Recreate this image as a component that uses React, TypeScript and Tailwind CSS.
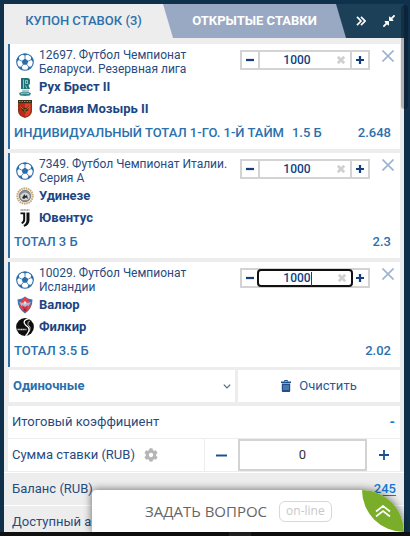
import type { ReactNode } from 'react';
import { FaCog, FaCompressAlt } from 'react-icons/fa';

type Team = { name: string; logo: ReactNode };

type Bet = {
  id: number;
  title: string;
  teams: Team[];
  market: string;
  pick: string;
  odds: string;
  active?: boolean;
};

const logoClass = 'size-[18px] shrink-0';

const RukhLogo = () => (
  <svg viewBox="0 0 18 18" className={logoClass}>
    <path d="M5 0h6.500q2.500 0 2.500 2.500v2.500q0 1.700-1.500 2.300L14 11H5z" fill="#1f7378" />
    <path d="M7.500 1.500v9M9.500 2.500h2v3h-2zM9.500 7.500l1.500 3" fill="none" stroke="#cfe3e3" strokeWidth=".7" />
    <path d="M6 11.500h7v2.500H6z" fill="#b5c8ca" />
    <path d="M3 15q6-2.500 12 0l-1 2.500q-5 .8-10 0z" fill="#35858a" />
    <path d="M5 15.500q4-1 8 0" fill="none" stroke="#d5e6e6" strokeWidth=".7" />
  </svg>
);

const SlaviaLogo = () => (
  <svg viewBox="0 0 18 18" className={logoClass}>
    <path d="M2 0h14v11q0 5-7 7-7-2-7-7z" fill="#8c3316" />
    <path d="M2 0h14v3H2z" fill="#3a3018" />
    <path d="M3 1.500h12" stroke="#a8912c" strokeWidth="1" strokeDasharray="1.500 1" />
    <path d="M3.500 3.500h11V11q0 4-5.500 5.700Q3.500 15 3.500 11z" fill="#c4251c" />
    <path d="M9 3.500h5.500V11q0 4-5.500 5.700z" fill="#e2402a" />
    <path d="M5 5.500l3 3 1-1 1 1 3-3-1 5-2 1-1 2.500-1-2.500-2-1z" fill="#3b2c10" />
    <path d="M5 6.500l2.500 3M13 6.500l-2.500 3M9 9v3.500" stroke="#c5a431" strokeWidth=".8" />
  </svg>
);

const UdineseLogo = () => (
  <svg viewBox="0 0 18 18" className={logoClass}>
    <circle cx="9" cy="9" r="7.700" fill="#f4efe4" stroke="#c5ac80" strokeWidth="2" strokeDasharray="1.600 .7" />
    <circle cx="9" cy="9" r="5.700" fill="#8f9194" stroke="#6b6e72" strokeWidth=".8" />
    <path d="M4.500 8q4.500-5 9 0v3l-2 2h-5l-2-2z" fill="#d5d7d9" />
    <path d="M6 11l2.500-4 .7 2L11 8l1 4-2-1.500L8 12z" fill="#2b2c30" />
  </svg>
);

const JuventusLogo = () => (
  <svg viewBox="0 0 18 18" className={logoClass}>
    <path d="M4.500 1h9" stroke="#555" strokeWidth="1" strokeDasharray="1.200 .4" />
    <path d="M4.500 3.500h4.700v7q0 3-3 4.500l-1-1.300q2-1.200 2-3.500V5.200H4.500z" fill="#111" />
    <path d="M10.500 3.500h3V11q0 5-5.300 6.700L7.500 16q3-1.500 3-5z" fill="#111" />
  </svg>
);

const ValurLogo = () => (
  <svg viewBox="0 0 18 18" className={logoClass}>
    <path d="M9 .5l3 2 4.500 1q0 9-7.500 14Q1.500 12.500 1.500 3.500L6 2.500z" fill="#3f74b5" />
    <path d="M9 1l3.500 3 2.500 6-3 4-3 2.500-3-2.500-3-4 2.500-6z" fill="#e6404a" />
    <path d="M3 6l4 1 2-2 2 2 4-1-2.500 4-2 .5L9 13l-1.500-2.500-2-.5z" fill="#a9bdd8" />
    <path d="M9 5l1.500 2L9 9 7.500 7z" fill="#d8dfea" />
    <path d="M6 9l3 2 3-2-1.500 4h-3z" fill="#c93440" />
    <path d="M7 13h4l-2 3z" fill="#7c3042" />
  </svg>
);

const FylkirLogo = () => (
  <svg viewBox="0 0 18 18" className={logoClass}>
    <circle cx="9" cy="9" r="8.900" fill="#0d0d0d" />
    <path d="M13 .5q-6 1.500-4.500 5Q9.500 7.500 12 9q3 3-2.500 9" fill="none" stroke="#fff" strokeWidth="1.300" />
    <path d="M14 3q-3 .5-2 3.500 3.500 2.500 1.500 7" fill="none" stroke="#ddd" strokeWidth=".8" />
    <path d="M1.500 11.500h9" stroke="#d8d8d8" strokeWidth="1.300" strokeDasharray="1.300 .4" />
  </svg>
);

const FootballIcon = ({ className }: { className: string }) => (
  <svg viewBox="0 0 18 18" className={className}>
    <circle cx="9" cy="9" r="8.300" fill="#fff" stroke="currentColor" strokeWidth="1.100" />
    <g fill="currentColor">
      <path d="M9 5.600l3.300 2.400-1.200 3.800H6.900L5.700 8z" />
      <path d="M5.800 1.200L9 2.700l3.200-1.500Q9 .1 5.800 1.200z" />
      <path d="M15.100 3.500l-.3 3.300 2.500 2.300q.2-3.400-2.200-5.600z" />
      <path d="M2.900 3.500l.3 3.300L.7 9.100Q.5 5.700 2.900 3.500z" />
      <path d="M15.700 13.500l-3.200.3-1.300 3q3-.7 4.500-3.300z" />
      <path d="M2.300 13.500l3.200.3 1.300 3q-3-.7-4.500-3.300z" />
    </g>
    <path
      d="M9 5.600V2.500M12.300 8l2.600-1.200M11.100 11.800l1.500 2.100M6.900 11.800l-1.500 2.100M5.700 8L3.100 6.800"
      stroke="currentColor"
      strokeWidth=".8"
    />
  </svg>
);

const bets: Bet[] = [
  {
    id: 12697,
    title: 'Футбол Чемпионат Беларуси. Резервная лига',
    teams: [
      { name: 'Рух Брест II', logo: <RukhLogo /> },
      { name: 'Славия Мозырь II', logo: <SlaviaLogo /> },
    ],
    market: 'ИНДИВИДУАЛЬНЫЙ ТОТАЛ 1-ГО. 1-Й ТАЙМ',
    pick: '1.5 Б',
    odds: '2.648',
  },
  {
    id: 7349,
    title: 'Футбол Чемпионат Италии. Серия А',
    teams: [
      { name: 'Удинезе', logo: <UdineseLogo /> },
      { name: 'Ювентус', logo: <JuventusLogo /> },
    ],
    market: 'ТОТАЛ 3 Б',
    pick: '',
    odds: '2.3',
  },
  {
    id: 10029,
    title: 'Футбол Чемпионат Исландии',
    teams: [
      { name: 'Валюр', logo: <ValurLogo /> },
      { name: 'Филкир', logo: <FylkirLogo /> },
    ],
    market: 'ТОТАЛ 3.5 Б',
    pick: '',
    odds: '2.02',
    active: true,
  },
];

function Sign({ plus = false, className }: { plus?: boolean; className: string }) {
  return (
    <svg viewBox="0 0 10 10" className={className} stroke="currentColor">
      <path d={plus ? 'M0 5h10M5 0v10' : 'M0 5h10'} />
    </svg>
  );
}

function StakeInput({ id, active }: { id: number; active?: boolean }) {
  return (
    <div className="relative flex h-5 w-[130px] shrink-0 border-2 border-[#d3d3d3] text-[#123f80]">
      <button type="button" aria-label="Уменьшить" className="flex w-4 items-center justify-center pb-px">
        <Sign className="size-2 stroke-[2.8]" />
      </button>
      <div
        className={
          active
            ? 'relative -mx-px -my-px flex flex-1 items-center rounded border-2 border-[#111] bg-white'
            : 'relative flex flex-1 items-center border-x-2 border-[#d3d3d3]'
        }
      >
        <input
          type="text"
          defaultValue="1000"
          aria-label={`Ставка ${id}`}
          className="w-full bg-transparent pr-4 text-center text-[12px] leading-4 font-medium outline-none"
        />
        {active && <span className="absolute top-px right-[39px] h-[14px] w-px bg-[#123f80]" />}
        <button type="button" aria-label="Очистить ставку" className="absolute right-[5px] text-[#d0d0d0]">
          <svg viewBox="0 0 8 8" className="size-2" fill="none" stroke="currentColor" strokeWidth="2.800">
            <path d="M.8.8l6.400 6.400M7.200.8L.8 7.200" />
          </svg>
        </button>
      </div>
      <button type="button" aria-label="Увеличить" className="flex w-4 items-center justify-center pb-px">
        <Sign plus className="size-2 stroke-[2.8]" />
      </button>
    </div>
  );
}

function BetCard({ bet }: { bet: Bet }) {
  return (
    <article className="border-l-2 border-[#2a6da8] bg-white pt-1 pr-[6px] pb-[6px]">
      <div className="flex items-start">
        <FootballIcon className="mt-[5px] ml-[6px] size-[18px] shrink-0 text-[#2a6da8]" />
        <h3 className="ml-[5px] h-7 flex-1 pr-2 text-[12px] leading-[14px] text-[#274b7f]">
          {`${bet.id}. ${bet.title}`}
        </h3>
        <div className="mt-[2px] flex gap-3">
          <StakeInput id={bet.id} active={bet.active} />
          <button type="button" aria-label="Удалить" className="size-3 text-[#9fb4d3]">
            <svg viewBox="0 0 12 12" fill="none" stroke="currentColor" strokeWidth="1.700">
              <path d="M.5.5l11 11M11.500.5l-11 11" />
            </svg>
          </button>
        </div>
      </div>
      <ul>
        {bet.teams.map((team) => (
          <li key={team.name} className="flex h-[22px] items-center gap-[5px] pl-[6px] text-[13px] font-bold text-[#1c4583]">
            {team.logo}
            {team.name}
          </li>
        ))}
      </ul>
      <div className="mt-[3px] flex h-5 items-center gap-2 pr-[3px] pl-1 text-[13px] font-medium text-[#2c70ac]">
        <span>{bet.market}</span>
        {bet.pick && <span>{bet.pick}</span>}
        <span className="ml-auto">{bet.odds}</span>
      </div>
    </article>
  );
}

function Tabs() {
  return (
    <nav className="flex h-[34px] bg-[#1d4059] text-[13px]">
      <button
        type="button"
        className="relative z-10 w-[169px] bg-[#ededed] pr-[10px] font-medium text-[#2c70ac] [clip-path:polygon(0_0,calc(100%-10px)_0,100%_100%,0_100%)]"
      >
        КУПОН СТАВОК (3)
      </button>
      <button
        type="button"
        className="-ml-[10px] flex-1 bg-[#9aa9c3] font-bold text-white [clip-path:polygon(0_0,calc(100%-10px)_0,100%_100%,0_100%)]"
      >
        ОТКРЫТЫЕ СТАВКИ
      </button>
      <div className="flex w-[58px] items-center justify-between pr-2 pl-[10px] text-white">
        <button type="button" aria-label="Свернуть">
          <svg viewBox="0 0 10 10" className="size-[10px]" fill="none" stroke="currentColor" strokeWidth="1.700">
            <path d="M1 .8L5 5 1 9.200M5 .8L9 5 5 9.200" />
          </svg>
        </button>
        <button type="button" aria-label="Уменьшить окно">
          <FaCompressAlt className="size-[14px]" />
        </button>
      </div>
    </nav>
  );
}

function CouponActions() {
  return (
    <div className="mt-[3px] flex h-8 gap-[3px] pl-px">
      <div className="relative w-[226px] bg-white">
        <select
          aria-label="Тип ставки"
          className="size-full appearance-none bg-transparent pl-1 text-[13px] font-bold text-[#2c70ac] outline-none"
        >
          <option>Одиночные</option>
        </select>
        <svg
          viewBox="0 0 8 5"
          className="pointer-events-none absolute top-[14px] right-1 h-[5px] w-2"
          fill="none"
          stroke="#506a83"
          strokeWidth="1.200"
        >
          <path d="M.8.7L4 4 7.200.7" />
        </svg>
      </div>
      <button type="button" className="flex flex-1 items-center justify-center gap-2 bg-white text-[13px] text-[#2a5a96]">
        <svg viewBox="0 0 10 12" className="h-3 w-[10px]">
          <path d="M3.500 1.500v-1h3v1" fill="none" stroke="#1c4f8c" />
          <path d="M0 1.500h10V3H0zM.8 3.500h8.400V11q0 1-1 1H1.800q-1 0-1-1z" fill="#1c4f8c" />
          <path d="M3 5v5M5 5v5M7 5v5" stroke="#c3d2e4" strokeWidth=".6" />
        </svg>
        Очистить
      </button>
    </div>
  );
}

function Summary() {
  return (
    <div className="mt-1 text-[13px] text-[#274b7f]">
      <div className="flex h-[33px] items-center justify-between border-b border-[#ededed] bg-white pr-[5px] pl-1">
        <span>Итоговый коэффициент</span>
        <span className="text-[14px] font-bold text-[#0c7ce0]">-</span>
      </div>
      <div className="flex h-8 bg-white">
        <div className="flex w-[197px] items-center gap-[9px] border-r border-[#ededed] pl-1">
          <label htmlFor="stake">Сумма ставки (RUB)</label>
          <FaCog className="size-[14px] text-[#b5b5b5]" />
        </div>
        <button type="button" aria-label="Уменьшить сумму" className="flex w-[33px] items-center justify-center text-[#1c5191]">
          <Sign className="size-[11px] stroke-[1.8]" />
        </button>
        <input
          id="stake"
          type="text"
          defaultValue="0"
          className="min-w-0 flex-1 border-2 border-[#d3d3d3] text-center text-[#333] outline-none"
        />
        <button type="button" aria-label="Увеличить сумму" className="flex w-[33px] items-center justify-center text-[#1c5191]">
          <Sign plus className="size-[10px] stroke-[1.8]" />
        </button>
      </div>
    </div>
  );
}

function ChatWidget() {
  return (
    <div className="absolute right-[6px] bottom-1 left-[92px] flex h-[42px] items-center rounded-tl rounded-tr-[42px] bg-white shadow-[0_0_8px_rgba(0,0,0,0.6)]">
      <button type="button" className="ml-[53px] flex items-center gap-3 text-[#666]">
        <span className="font-['Open_Sans',sans-serif] text-[15px]">ЗАДАТЬ ВОПРОС</span>
        <span className="flex h-[21px] items-center rounded-md border border-[#d8d8d8] px-[6px] font-['Open_Sans',sans-serif] text-[12px] text-[#c8c8c8]">
          on-line
        </span>
      </button>
      <button
        type="button"
        aria-label="Развернуть"
        className="ml-auto flex size-[42px] items-center justify-center rounded-tr-full rounded-bl-full bg-[#7aae2a] text-white"
      >
        <svg viewBox="0 0 16 12" className="h-3 w-4" fill="none" stroke="currentColor" strokeWidth="1.700">
          <path d="M1 6.500L8 1l7 5.500M1 11.500L8 6l7 5.500" />
        </svg>
      </button>
    </div>
  );
}

export default function App() {
  return (
    <div className="relative flex h-screen flex-col overflow-hidden bg-[#0f314c] pt-1 pr-[6px] pl-1 font-['Roboto',sans-serif]">
      <main className="min-h-0 flex-1 overflow-hidden bg-[#ededed]">
        <Tabs />
        <section className="px-1 pt-[6px]">
          <div className="flex flex-col gap-1">
            {bets.map((bet) => (
              <BetCard key={bet.id} bet={bet} />
            ))}
          </div>
          <CouponActions />
          <Summary />
        </section>
        <div className="mt-px border-t border-white px-2 text-[13px] text-[#274b7f]">
          <div className="flex h-8 items-center justify-between">
            <span>Баланс (RUB)</span>
            <a href="#balance" className="font-medium text-[#1478d4] underline underline-offset-2">
              245
            </a>
          </div>
          <div className="-mx-2 flex h-8 items-center border-t border-white px-2">Доступный аванс</div>
        </div>
      </main>
      <div className="absolute top-[5px] right-[2px] h-[104px] w-[7px] rounded-full bg-black/25" />
      <ChatWidget />
      <footer className="-mr-[6px] -ml-1 h-1 bg-[#111]">
        <div className="ml-[229px] h-full w-[22px] bg-[#262626]" />
      </footer>
    </div>
  );
}
